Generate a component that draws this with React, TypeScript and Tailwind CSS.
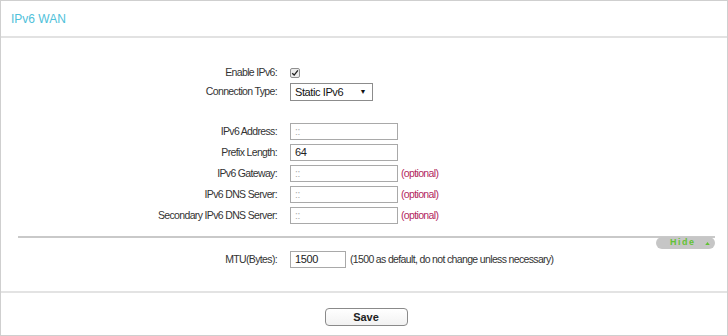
import type { ReactNode } from "react";

const font = { fontFamily: '"Liberation Sans", Arial, sans-serif' };

function Row({ label, children, h = "h-[21px]" }: { label: string; children?: ReactNode; h?: string }) {
  return (
    <div className={`flex items-center ${h}`}>
      <div className="w-[277px] shrink-0 pr-[1px] text-right text-[10.5px] tracking-[-0.65px] text-[#333]">{label}</div>
      <div className="ml-[12px] flex items-center">{children}</div>
    </div>
  );
}

function TextBox({ value, placeholder, w = "w-[108px]" }: { value?: string; placeholder?: string; w?: string }) {
  return (
    <div className={`flex h-[17px] ${w} items-center border border-[#a9a9a9] bg-white px-[4px] text-[11px] tracking-[-0.4px]`}>
      {value ? (
        <span className="text-[#222]">{value}</span>
      ) : (
        <span className="text-[10px] text-[#aaa]">{placeholder}</span>
      )}
    </div>
  );
}

function Optional() {
  return <span className="ml-[3px] text-[10.5px] tracking-[-0.65px] text-[#b3265e]">(optional)</span>;
}

export default function App() {
  return (
    <div className="h-[336px] w-[728px] bg-white" style={font}>
      <div className="flex h-full flex-col border border-[#cfcfcf]">
        {/* header */}
        <div className="flex h-[37px] items-center border-b-2 border-[#e2e2e2] px-[10px]">
          <span className="text-[12px] text-[#4fc1da]">IPv6 WAN</span>
        </div>

        <div className="pt-[25px]">
          <Row label="Enable IPv6:" h="h-[19px]">
            <div className="flex h-[10px] w-[10px] items-center justify-center rounded-[2px] border border-[#8f8f8f] bg-[#ececec]">
              <svg viewBox="0 0 10 10" className="h-[8px] w-[8px]">
                <path d="M1.5 5.2 L4 7.6 L8.6 1.8" fill="none" stroke="#222" strokeWidth="1.7" />
              </svg>
            </div>
          </Row>
          <Row label="Connection Type:" h="h-[20px]">
            <div className="flex h-[18px] w-[83px] items-center justify-between border border-[#8c8c8c] bg-white pl-[4px] pr-[6px] text-[11px] tracking-[-0.4px] text-[#111]">
              <span>Static IPv6</span>
              <span className="text-[7px]">▼</span>
            </div>
          </Row>

          <div className="mt-[19px]">
            <Row label="IPv6 Address:">
              <TextBox placeholder="::" />
            </Row>
            <Row label="Prefix Length:">
              <TextBox value="64" />
            </Row>
            <Row label="IPv6 Gateway:">
              <TextBox placeholder="::" />
              <Optional />
            </Row>
            <Row label="IPv6 DNS Server:">
              <TextBox placeholder="::" />
              <Optional />
            </Row>
            <Row label="Secondary IPv6 DNS Server:">
              <TextBox placeholder="::" />
              <Optional />
            </Row>
          </div>
        </div>

        {/* advanced divider */}
        <div className="relative mx-[17px] mt-[10px] mr-[12px] h-[2px] bg-[#c9c9c9]">
          <button className="absolute right-0 top-[1px] flex h-[12px] w-[59px] items-center rounded-full bg-[#c6c6c6] pl-[14px] text-[9px] font-bold tracking-[1.5px] text-[#62c234]">
            <span>Hide</span>
            <svg viewBox="0 0 6 4" className="ml-[9px] h-[3px] w-[5px]">
              <path d="M0 4 L3 0 L6 4 Z" fill="#62c234" />
            </svg>
          </button>
        </div>

        <div className="mt-[11px]">
          <Row label="MTU(Bytes):">
            <TextBox value="1500" w="w-[56px]" />
            <span className="ml-[4px] text-[10.5px] tracking-[-0.65px] text-[#333]">(1500 as default, do not change unless necessary)</span>
          </Row>
        </div>

        <div className="mt-[21px] h-[2px] bg-[#e3e3e3]" />

        <div className="flex justify-center pt-[15px]">
          <button className="ml-[4px] h-[18px] w-[83px] rounded-[4px] border border-[#8a8a8a] bg-gradient-to-b from-white to-[#f2f2f2] text-[11px] font-bold text-[#222]">
            Save
          </button>
        </div>
      </div>
    </div>
  );
}
